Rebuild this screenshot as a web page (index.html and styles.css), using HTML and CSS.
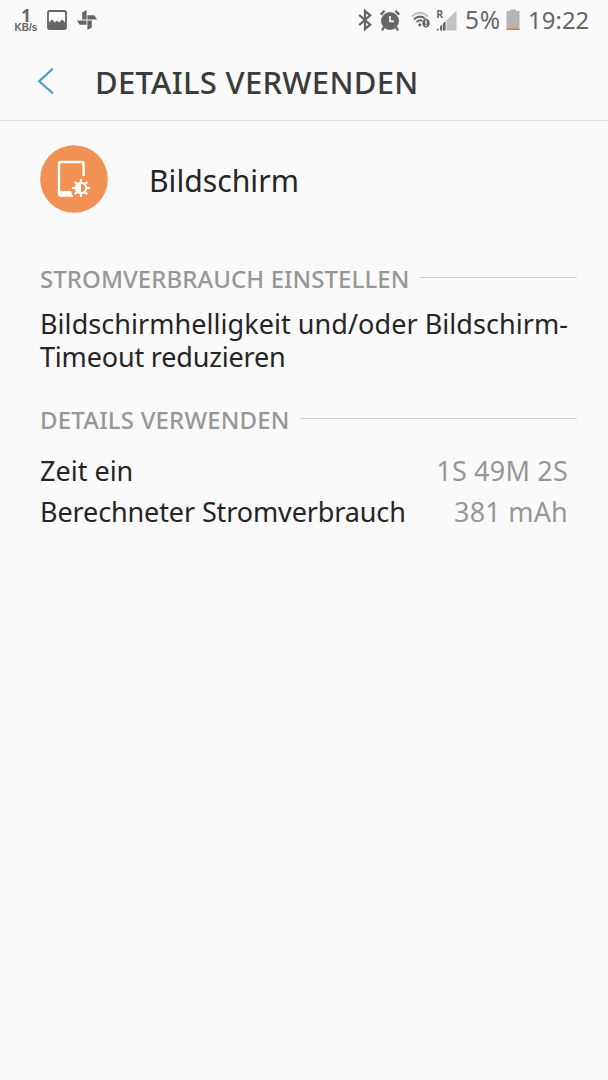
FILE: index.html
```html
<!DOCTYPE html>
<html lang="de">
<head>
<meta charset="utf-8">
<title>Details verwenden</title>
<link rel="stylesheet" href="styles.css">
</head>
<body>
<div class="status">
  <div class="speed"><b>1</b><span>KB/s</span></div>
  <svg class="picture" width="20" height="20" viewBox="0 0 20 20"><rect x="1" y="1" width="18" height="18" rx="1.5" fill="none" stroke="#666" stroke-width="1.8"/><path d="M1 13.500l4-4 3 3 2-2 2 2 3-3 4 4V19H1z" fill="#666"/></svg>
  <svg class="pinwheel" width="20" height="20" viewBox="0 0 20 20" fill="#666"><path d="M9.600 9.600H5.200V2.600L9.600 0zM10.400 9.600V5.200h7L20 9.600zM10.400 10.400h4.400v7L10.400 20zM9.600 10.400v4.400h-7L0 10.400z"/></svg>
  <svg class="bluetooth" width="14" height="22" viewBox="0 0 14 22" fill="none" stroke="#666" stroke-width="2.3"><path d="M1.200 6l11 9.700L7 20V2l5.200 4.300L1.200 16"/></svg>
  <svg class="alarm" width="20" height="21" viewBox="0 0 20 21"><circle cx="10" cy="11" r="9" fill="#666"/><path d="M.8 4.600l3.800-3.800M19.200 4.600L15.400.8M4 17l-2 3.500M16 17l2 3.500" stroke="#666" stroke-width="2.300"/><path d="M10 6v5.300h4" fill="none" stroke="#fafafa" stroke-width="1.700"/></svg>
  <svg class="wifi" width="20" height="18" viewBox="0 0 20 18"><g fill="none" stroke-width="2"><path d="M.8 5.400q8-7 16.200 0" stroke="#c2c2c2"/><path d="M3 8.200q6-5 12-.2M5.500 11q3.500-3 6-.8" stroke="#666"/></g><circle cx="8.800" cy="13.800" r="1.600" fill="#666"/><ellipse cx="15" cy="12.200" rx="4" ry="4.800" fill="#666" stroke="#fafafa" stroke-width=".6"/><path d="M15 9.200v3.500M15 13.700v1.600" stroke="#fafafa" stroke-width="1.400"/></svg>
  <svg class="signal" width="21" height="21" viewBox="0 0 21 21"><path d="M10.500 20.500V10.500L20.500.5v20z" fill="#c2c2c2"/><path d="M0 20.500l2.600-2.600v2.600zM4 20.500V16.500l2-2v6zM6.800 20.500v-6.800l2.800-2.600v9.400z" fill="#666"/><text x=".2" y="8" class="roaming">R</text></svg>
  <span class="percent">5%</span>
  <svg class="battery" width="14" height="22" viewBox="0 0 14 22"><path d="M4 .500h6V2h3.500v18H.5V2H4z" fill="#b5b5b5"/><path d="M.5 19.500h13V21H.5z" fill="#e7704f"/></svg>
  <span class="clock">19:22</span>
</div>
<header class="bar">
  <svg class="back" width="18" height="28" viewBox="0 0 18 28"><path d="M16 1.500L2.200 14.200 16 26.500" fill="none" stroke="#479fc3" stroke-width="2.200"/></svg>
  <h1>DETAILS VERWENDEN</h1>
</header>
<main>
  <div class="app">
    <svg width="68" height="68" viewBox="0 0 68 68"><circle cx="34" cy="34" r="33.800" fill="#f19153"/><path d="M43.600 31V19a2 2 0 0 0-2-2H21a2 2 0 0 0-2 2v30" fill="none" stroke="#fff" stroke-width="2.400"/><path d="M18 46h13.200c.2 2.500 1.300 4 2.300 5.700H20.500Q18 51.700 18 49z" fill="#fff"/><g transform="translate(41 43)"><path d="M0-9V9M-9 0H9M-6.200-6.200L6.200 6.200M-6.200 6.200L6.200-6.200" stroke="#fff" stroke-width="2"/><circle r="6.300" fill="#fff"/><path d="M0-4.300a4.300 4.300 0 0 1 0 8.600z" fill="#f19153"/></g></svg>
    <span class="name">Bildschirm</span>
  </div>
  <h2 class="section first"><span>STROMVERBRAUCH EINSTELLEN</span></h2>
  <p class="advice"><span class="line-wide">Bildschirmhelligkeit und/oder Bildschirm-</span><br><span class="line-narrow">Timeout reduzieren</span></p>
  <h2 class="section second"><span>DETAILS VERWENDEN</span></h2>
  <dl>
    <div><dt>Zeit ein</dt><dd>1S 49M 2S</dd></div>
    <div><dt class="usage">Berechneter Stromverbrauch</dt><dd>381 mAh</dd></div>
  </dl>
</main>
</body>
</html>
```
FILE: styles.css
```css
* { box-sizing: border-box; margin: 0; padding: 0; }
body { width: 608px; height: 1080px; overflow: hidden; background: #fafafa; color: #252525; font-family: "Noto Sans", sans-serif; white-space: nowrap; }
svg { display: block; flex: none; overflow: visible; }
.status { height: 40px; display: flex; align-items: center; padding: 0 0 0 14px; color: #666; font-size: 23.8px; line-height: 40px; }
.speed { width: 24px; padding-top: 1px; font: bold 10px/10px "Liberation Sans", Arial, sans-serif; text-align: center; }
.speed b { display: block; font: bold 17px/14px "Noto Sans", sans-serif; }
.speed span { display: block; }
.picture { margin-left: 9px; }
.pinwheel { margin-left: 10px; }
.bluetooth { margin-left: 261px; }
.alarm { margin-left: 8px; }
.wifi { margin-left: 11px; }
.signal { margin-left: 5px; }
.roaming { font: bold 10.500px "Noto Sans", sans-serif; fill: #666; }
.percent { width: 37px; margin-left: 8px; font-size: 24.500px; letter-spacing: .8px; }
.battery { margin-left: 4px; }
.clock { margin-left: 8px; letter-spacing: .1px; }
.bar { height: 81px; display: flex; align-items: center; padding: 1px 0 0 37px; border-bottom: 1px solid #e2e2e2; }
.back { margin-top: 1px; }
h1 { margin: 3px 0 0 40px; font-size: 31px; line-height: 76px; font-weight: 500; letter-spacing: .3px; color: #3b3b3b; }
.app { display: flex; align-items: center; height: 68px; margin: 24px 0 0 40px; }
.name { margin: 2px 0 0 41px; font-size: 30.200px; }
.section { display: flex; align-items: flex-start; gap: 10px; margin: 0 31px 0 40px; font-size: 24px; line-height: 32px; font-weight: 500; color: #979797; }
.section span { letter-spacing: .06px; }
.section::after { content: ""; flex: 1; height: 1px; margin-top: 14px; background: #cfcfcf; }
.first { margin-top: 50px; }
.advice { margin: 12px 0 0 40px; font-size: 27px; line-height: 33px; }
.line-wide { letter-spacing: .05px; }
.line-narrow { letter-spacing: -.18px; }
.second { margin-top: 31px; }
.second span { letter-spacing: .18px; }
dl { margin: 15px 40px 0 40px; font-size: 27px; line-height: 40px; }
dl div { display: flex; justify-content: space-between; }
dl div + div { margin-top: 1px; }
.usage { letter-spacing: -.12px; }
dd { color: #979797; letter-spacing: .2px; }
```
